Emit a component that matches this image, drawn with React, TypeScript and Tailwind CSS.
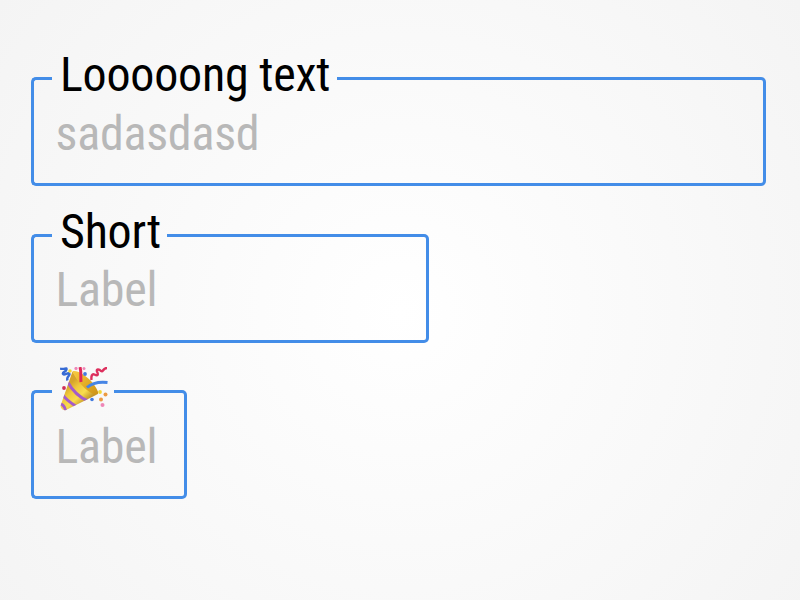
import type { ReactNode } from "react";

const fields = [
  {
    label: "Looooong text",
    placeholder: "sadasdasd",
    width: "w-[735px]",
    notch: "w-[285px]",
  },
  {
    label: "Short",
    placeholder: "Label",
    width: "w-[398px]",
    notch: "w-[115px]",
  },
  {
    label: <PartyPopper />,
    placeholder: "Label",
    width: "w-[156px]",
    notch: "w-[62px]",
  },
];

function PartyPopper() {
  return (
    <svg className="mt-[6.500px] h-[46px] w-[48px]" viewBox="0 0 48 46">
      <defs>
        <linearGradient id="cone" x1="4" y1="22" x2="20" y2="40" gradientUnits="userSpaceOnUse">
          <stop offset="0" stopColor="#d6a42b" />
          <stop offset="0.3" stopColor="#f0c83c" />
          <stop offset="0.65" stopColor="#f9dd4e" />
          <stop offset="1" stopColor="#c39427" />
        </linearGradient>
        <linearGradient id="inside" x1="14" y1="6" x2="36" y2="28" gradientUnits="userSpaceOnUse">
          <stop offset="0" stopColor="#f5c83e" />
          <stop offset="0.6" stopColor="#e0a822" />
          <stop offset="1" stopColor="#cd9418" />
        </linearGradient>
        <clipPath id="body">
          <path d="M12.500 4.500C18 14 27 25 37 27.500L6 43C3 44 0 41 .8 38Z" />
        </clipPath>
      </defs>
      <path d="M12.500 4.500C18 14 27 25 37 27.500L6 43C3 44 0 41 .8 38Z" fill="url(#cone)" />
      <g clipPath="url(#body)" fill="none" stroke="#a45cca" strokeWidth="3">
        <path d="M7 14C12 23 18 30 28 34" />
        <path d="M2 27C6 33 11 36 17 40" />
        <path d="M0 37C3 37 5 40 6 45" />
      </g>
      <path d="M12.500 4.500C16 2.500 25 8 31 14C37 21 40 27 37 27.500C31 29 16 14 12.500 4.500Z" fill="url(#inside)" />
      <g fill="none">
        <path d="M20 0C21.500 5 20.500 10 21 15" stroke="#df2857" strokeWidth="3" />
        <path d="M27 20.500C32 16 38 14.500 47.500 15.500" stroke="#4685e5" strokeWidth="3" />
        <path
          d="M0 1.500C4 3 7 0 6.500 2.500C6 5 2 5 3 7C4 9 9 4.500 9.500 7C10 9.500 6 9 7.500 13.500"
          stroke="#376bd4"
          strokeWidth="2.400"
        />
        <path
          d="M31.500 13C31 9 32 6.500 34.500 7.500C38 9.500 38.500 7.500 37 4.500C36 1.500 39.500 2.500 41 4C43.500 5.500 42.500 1 47 1"
          stroke="#dd2f5d"
          strokeWidth="2.400"
        />
      </g>
      <g fill="#f2d735">
        <circle cx="10" cy="4" r="1.800" />
        <circle cx="40" cy="25" r="1.900" />
      </g>
      <g fill="#437bdf">
        <circle cx="25" cy="7" r="1.900" />
        <circle cx="32" cy="32.500" r="1.800" />
      </g>
      <g fill="#ec9a43">
        <circle cx="45.500" cy="27.500" r="2" />
        <circle cx="41" cy="32.500" r="2" />
      </g>
      <g fill="#ef86b7">
        <circle cx="16" cy="1.500" r="1.600" />
        <circle cx="24" cy="1.500" r="1.500" />
        <circle cx="42.500" cy="38" r="2" />
      </g>
      <circle cx="4" cy="21" r="1.900" fill="#cf3059" />
    </svg>
  );
}

interface FieldProps {
  label: ReactNode;
  placeholder: string;
  width: string;
  notch: string;
}

function OutlinedField({ label, placeholder, width, notch }: FieldProps) {
  return (
    <div className={`relative h-[109px] ${width}`}>
      <div className="flex h-full">
        <div className="w-[21px] rounded-l-[5px] border-3 border-r-0 border-[#438de8]" />
        <div className={`border-b-3 border-[#438de8] ${notch}`} />
        <div className="flex-1 rounded-r-[5px] border-3 border-l-0 border-[#438de8]" />
      </div>
      <div className="absolute top-[-30px] left-[29px] h-14 text-[48px] leading-[56px] tracking-[-0.23px] whitespace-nowrap text-black">
        {label}
      </div>
      <div className="absolute top-[28.500px] left-[24.500px] text-[48px] leading-[56px] tracking-[-0.25px] whitespace-nowrap text-[#b8b8b8]">
        {placeholder}
      </div>
    </div>
  );
}

export default function App() {
  return (
    <main className="h-[600px] w-[800px] overflow-hidden bg-[radial-gradient(circle_at_50%_52%,#ffffff_0%,#f4f4f4_100%)] pt-[77px] pl-[31px] font-['Roboto_Condensed','Roboto',sans-serif] [font-stretch:75%]">
      <div className="flex flex-col gap-[47.500px]">
        {fields.map((field, index) => (
          <OutlinedField key={index} {...field} />
        ))}
      </div>
    </main>
  );
}
